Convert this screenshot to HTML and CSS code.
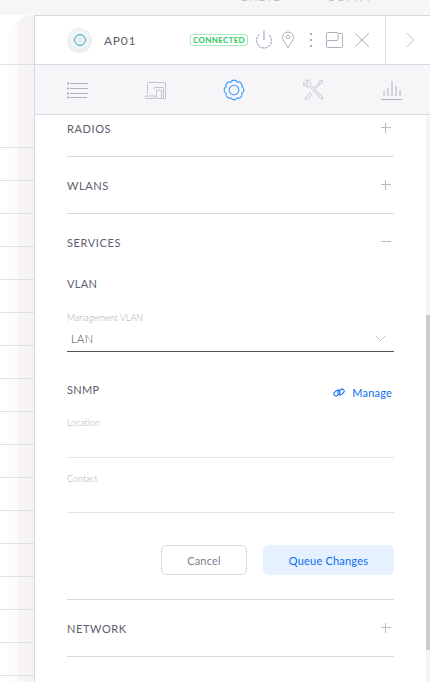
FILE: index.html
```html
<!DOCTYPE html>
<html lang="en">
<head>
  <meta charset="UTF-8">
  <meta name="viewport" content="width=device-width, initial-scale=1">
  <title>AP01 Properties</title>
  <link rel="stylesheet" href="styles.css">
</head>
<body>
  <div class="top-strip">
    <span class="top-label first">BASIC</span>
    <span class="top-label">SUMM</span>
  </div>
  <div class="backdrop">
    <div class="table-rows">
      <div class="table-row tall"></div>
      <div class="table-row head-gap"></div>
      <div class="table-row"></div>
      <div class="table-row"></div>
      <div class="table-row"></div>
      <div class="table-row"></div>
      <div class="table-row"></div>
      <div class="table-row"></div>
      <div class="table-row"></div>
      <div class="table-row"></div>
      <div class="table-row"></div>
      <div class="table-row"></div>
      <div class="table-row"></div>
      <div class="table-row"></div>
      <div class="table-row"></div>
      <div class="table-row"></div>
      <div class="table-row"></div>
      <div class="table-row"></div>
    </div>
    <div class="panel-shadow"></div>
  </div>

  <div class="panel">
    <div class="panel-head">
      <div class="device">
        <div class="device-pic"><span class="device-ring"></span></div>
        <span class="device-name">AP01</span>
        <span class="status">CONNECTED</span>
        <div class="head-icons">
          <svg class="icon dark power" width="20" height="20" viewBox="0 0 20 20"><path d="M5.500 4.500a7.500 7.500 0 1 0 9 0" stroke-dasharray="2.500 .8" stroke-width="1.300"/><path d="M10 .5v9.500" stroke-width="1.300"/></svg>
          <svg class="icon dark pin" width="14" height="18" viewBox="0 0 14 18"><path d="M7 17C5 12 1.500 9.500 1.500 6.500a5.500 5.500 0 0 1 11 0C12.500 9.500 9 12 7 17z"/><circle cx="7" cy="6" r="1.800"/></svg>
          <svg class="icon dark dots" width="4" height="16" viewBox="0 0 4 16"><path d="M2 1v2M2 7v2M2 13v2" stroke-width="2"/></svg>
          <svg class="icon dark split" width="17" height="16" viewBox="0 0 17 16"><rect x=".5" y=".5" width="11.500" height="8" rx="1"/><path d="M12 1.500h3.500a1 1 0 0 1 1 1v12a1 1 0 0 1-1 1h-14a1 1 0 0 1-1-1v-6"/></svg>
          <svg class="icon dark cross" width="16" height="16" viewBox="0 0 16 16"><path d="M1 1l14 14M15 1L1 15"/></svg>
        </div>
      </div>
      <div class="collapse">
        <svg class="icon" width="10" height="16" viewBox="0 0 10 16"><path d="M1.500 1l7 7-7 7"/></svg>
      </div>
    </div>

    <div class="tabs">
      <svg class="icon dark" width="21" height="18" viewBox="0 0 21 18"><path d="M3 2.500h18M3 7.500h18M3 12.500h18M3 16.500h17"/><path d="M0 2.500h2M0 7.500h2M0 12.500h2M0 16.500h2" stroke-width="2"/></svg>
      <svg class="icon" width="21" height="18" viewBox="0 0 21 18"><path d="M2.500 13V2.500a1 1 0 0 1 1-1h16a1 1 0 0 1 1 1v15h-4"/><path d="M11.500 9h5v8.500h-5zM9.500 8V6.500h9v10M.5 15h9.500v2.500H1.500a1 1 0 0 1-1-1z"/></svg>
      <svg class="icon active" width="22" height="22" viewBox="0 0 22 22"><path d="M18.850 7.750A3.600 3.600 0 0 1 18.850 14.250A3.600 3.600 0 0 1 14.250 18.850A3.600 3.600 0 0 1 7.750 18.850A3.600 3.600 0 0 1 3.150 14.250A3.600 3.600 0 0 1 3.150 7.750A3.600 3.600 0 0 1 7.750 3.150A3.600 3.600 0 0 1 14.250 3.150A3.600 3.600 0 0 1 18.850 7.750z"/><circle cx="11" cy="11" r="4.800"/></svg>
      <svg class="icon" width="22" height="22" viewBox="0 0 22 22"><path d="M7 7L20 20.500 21 19 8.500 5.500C9 3 7 .5 3.500 1L6 4 4.500 6 1.500 3.500C1 7 4 8.500 7 7z"/><path d="M12 9l5-5 .5-2L20 1l1 2-2 1-5 5.500M9 13l-6 6 1.500 2 6-6"/></svg>
      <svg class="icon dark" width="21" height="20" viewBox="0 0 21 20"><path d="M0 19.500h21M3 16v-5M7 16V8M11 16V1M15 16V6M19 16v-6"/></svg>
    </div>

    <div class="panel-body">
      <section class="acc first">
        <div class="acc-head"><span>RADIOS</span><span class="plus"></span></div>
      </section>
      <section class="acc">
        <div class="acc-head"><span>WLANS</span><span class="plus"></span></div>
      </section>
      <section class="acc">
        <div class="acc-head"><span>SERVICES</span><span class="minus"></span></div>
        <div class="acc-body">
          <h4 class="sub-title vlan">VLAN</h4>
          <label class="field-label">Management VLAN</label>
          <div class="select">
            <span>LAN</span>
            <svg class="icon" width="11" height="7" viewBox="0 0 11 7"><path d="M1 1l4.500 4.500L10 1"/></svg>
          </div>
          <div class="snmp-head">
            <h4 class="sub-title">SNMP</h4>
            <a class="manage">
              <svg class="link-icon" width="12" height="9" viewBox="0 0 12 9"><ellipse cx="4" cy="5" rx="3.500" ry="2.200" transform="rotate(-35 4 5)"/><ellipse cx="8" cy="4" rx="3.500" ry="2.200" transform="rotate(-35 8 4)"/></svg>
              Manage
            </a>
          </div>
          <div class="input-field location"><label class="field-label">Location</label></div>
          <div class="input-field contact"><label class="field-label">Contact</label></div>
          <div class="actions">
            <button class="btn cancel-btn">Cancel</button>
            <button class="btn queue-btn">Queue Changes</button>
          </div>
        </div>
      </section>
      <section class="acc">
        <div class="acc-head"><span>NETWORK</span><span class="plus"></span></div>
      </section>
      <section class="acc">
        <div class="acc-head last"><span class="plus"></span></div>
      </section>
    </div>
    <div class="scroll-track"></div>
  </div>
</body>
</html>
```

FILE: styles.css
```css
* {
  box-sizing: border-box;
}

html, body {
  height: 100%;
}

body {
  margin: 0;
  overflow: hidden;
  background: #fff;
  font-family: Lato, "Open Sans", sans-serif;
  font-weight: 300;
  color: #50525f;
}

.top-strip {
  display: flex;
  height: 15px;
  background: #f6f6f7;
  overflow: hidden;
}

.top-label {
  margin-top: -9px;
  margin-left: 47px;
  font-size: 12px;
  line-height: 12px;
  letter-spacing: 1.500px;
  color: #9a9cac;
}

.top-label.first {
  margin-left: 241px;
}

.table-row {
  height: 33px;
  border-bottom: 1px solid #dfe0ea;
}

.table-row.tall {
  height: 50px;
}

.table-row.head-gap {
  height: 83px;
}

.backdrop {
  position: relative;
}

.panel-shadow {
  position: absolute;
  top: 0;
  left: 8px;
  width: 26px;
  height: 667px;
  background: linear-gradient(to right, rgba(246, 226, 240, .12) 0, rgba(246, 226, 240, .18) 10px, rgba(225, 222, 225, .3) 11px, rgba(225, 222, 225, .3) 17px, rgba(232, 216, 225, .35) 18px);
  border-top-left-radius: 30px;
}

.panel {
  position: absolute;
  top: 15px;
  left: 34px;
  right: 0;
  bottom: 0;
  display: flex;
  flex-direction: column;
  background: #fff;
  border-top: 1px solid #d8d9e6;
  border-left: 1px solid #d8d9e6;
}

.panel-head {
  display: flex;
  flex: none;
  height: 49px;
  border-bottom: 1px solid #d8d9e6;
}

.device {
  display: flex;
  flex: 1;
  align-items: center;
  padding-left: 32px;
  border-right: 1px solid #d8d9e6;
}

.device-pic {
  display: flex;
  align-items: center;
  justify-content: center;
  width: 25px;
  height: 25px;
  border-radius: 50%;
  background: radial-gradient(circle at 50% 45%, #f8f8f9 0, #f3f3f4 50%, #e2e2e5 100%);
}

.device-ring {
  width: 12px;
  height: 12px;
  border: 1.500px solid #33aaec;
  border-radius: 50%;
  background: #e8edf1;
}

.device-name {
  margin-left: 12px;
  font-size: 12px;
  font-weight: 400;
  letter-spacing: .7px;
  color: #5c5e6c;
}

.status {
  margin-left: 54px;
  padding: 0 2px;
  height: 12px;
  border: 1px solid #a9e9bd;
  border-radius: 3px;
  font-size: 8px;
  font-weight: 700;
  line-height: 10px;
  letter-spacing: .3px;
  color: #2bc95d;
}

.head-icons {
  display: flex;
  align-items: center;
  margin-left: 6px;
}

.pin {
  margin-left: 7px;
}

.dots {
  margin-left: 14px;
}

.split {
  margin-left: 13px;
}

.cross {
  margin-left: 11px;
}

.icon {
  flex: none;
  fill: none;
  stroke: #c3c4d1;
  stroke-width: 1;
}

.icon.dark {
  stroke: #aeb0bf;
}

.icon.active {
  stroke: #3f97ff;
  stroke-width: 1.100;
}

.collapse {
  display: flex;
  align-items: center;
  justify-content: center;
  width: 44px;
  padding-left: 4px;
}

.tabs {
  display: flex;
  flex: none;
  align-items: center;
  justify-content: space-between;
  height: 50px;
  padding: 0 28px 0 32px;
  background: #f6f6f8;
  border-bottom: 1px solid #d8d9e6;
}

.panel-body {
  flex: 1;
  overflow: hidden;
  padding: 0 36px 0 32px;
}

.acc {
  border-bottom: 1px solid #d8d9e6;
}

.acc.first .acc-head {
  height: 41px;
  padding-bottom: 15px;
}

.acc-head {
  display: flex;
  align-items: center;
  justify-content: space-between;
  height: 56px;
  padding-right: 3px;
  font-size: 11px;
  font-weight: 400;
  letter-spacing: .6px;
  color: #5c5e6c;
}

.acc-head.last {
  justify-content: flex-end;
  padding-top: 4px;
}

.plus, .minus {
  position: relative;
  width: 10px;
  height: 10px;
}

.plus::before, .minus::before {
  content: "";
  position: absolute;
  top: 4px;
  left: 0;
  width: 10px;
  height: 1px;
  background: #b9bac6;
}

.plus::after {
  content: "";
  position: absolute;
  top: 0;
  left: 4px;
  width: 1px;
  height: 10px;
  background: #b9bac6;
}

.acc-body {
  padding-bottom: 24px;
}

.sub-title {
  margin: 0;
  font-size: 11px;
  font-weight: 400;
  letter-spacing: .3px;
  color: #5c5e6c;
}

.sub-title.vlan {
  padding-top: 7px;
  line-height: 14px;
}

.field-label {
  display: block;
  font-size: 9px;
  line-height: 12px;
  color: #a9abb8;
}

.vlan + .field-label {
  margin-top: 21px;
}

.select {
  display: flex;
  align-items: center;
  justify-content: space-between;
  height: 28px;
  padding: 2px 8px 0 4px;
  border-bottom: 1px solid #50525f;
  font-size: 11px;
  letter-spacing: .5px;
  color: #3c3e4c;
}

.snmp-head {
  display: flex;
  justify-content: space-between;
  align-items: center;
  margin-top: 28px;
  padding-right: 2px;
  height: 18px;
}

.manage {
  display: flex;
  align-items: center;
  gap: 7px;
  margin-top: 7px;
  font-size: 11px;
  font-weight: 400;
  letter-spacing: .2px;
  color: #0b6cf3;
}

.link-icon {
  fill: none;
  stroke: #0b6cf3;
  stroke-width: 1;
}

.input-field {
  height: 55px;
  border-bottom: 1px solid #e2e3ea;
}

.input-field.location {
  margin-top: 19px;
  height: 41px;
}

.input-field.contact {
  padding-top: 15px;
}

.actions {
  display: flex;
  justify-content: flex-end;
  gap: 16px;
  margin-top: 32px;
}

.btn {
  height: 30px;
  border-radius: 6px;
  font-family: inherit;
  font-size: 11px;
  font-weight: 400;
  letter-spacing: .2px;
  cursor: pointer;
}

.cancel-btn {
  width: 86px;
  border: 1px solid #d8d9e6;
  background: #fff;
  color: #7c7e8c;
}

.queue-btn {
  width: 131px;
  border: 0;
  background: #e5f1fe;
  color: #0b6cf3;
}

.scroll-track {
  position: absolute;
  top: 100px;
  right: 0;
  bottom: 0;
  width: 4px;
  background: linear-gradient(to bottom, #f8f3f4 199px, #cbcbcb 199px, #cbcbcb 534px, #f8f3f4 534px);
}
```
